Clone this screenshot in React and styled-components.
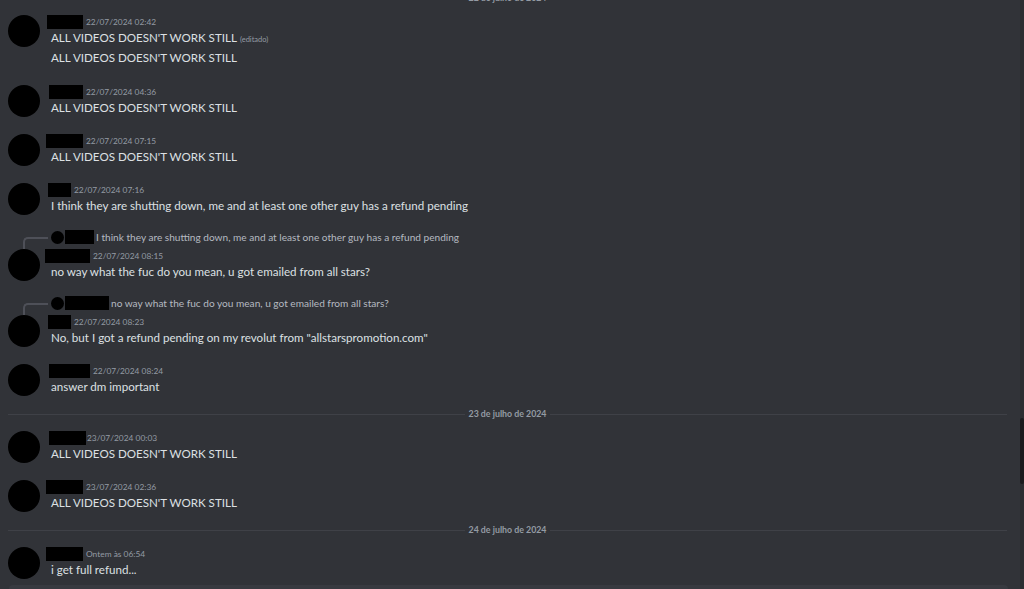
import styled, { createGlobalStyle } from 'styled-components'

const Global = createGlobalStyle`
    html, body {
        margin:0;
        padding:0;
        background:#313338;
        overflow:hidden;
    }
    body {
        font-family: Lato, "Noto Sans", sans-serif;
        -webkit-font-smoothing: antialiased;
    }
`

const Pagina = styled.div`
    width:1024px;
    height:589px;
    display:grid;
    grid-template-columns:1020px 4px;
    grid-template-rows:585px 1fr;
    background:#313338;
    overflow:hidden;
`

const Chat = styled.div`
    grid-row:1/2;
    grid-column:1/2;
    overflow:hidden;
`

const Lista = styled.div`
    display:flex;
    flex-direction:column;
    margin-top:-20px;
`

const Divisor = styled.div`
    height:18px;
    display:flex;
    align-items:center;
    margin:9px 13px 0 8px;
    flex-shrink:0;
`

const LineaDivisor = styled.span`
    flex:1;
    height:1px;
    background:#3f4147;
`

const TextoDivisor = styled.span`
    padding:0 4px;
    color:#949ba4;
    font-size:8.8px;
    font-weight:700;
    line-height:18px;
`

const Grupo = styled.div`
    display:flex;
    flex-direction:column;
    padding-top:${props => props.$padding}px;
    flex-shrink:0;
`

const Respuesta = styled.div`
    height:14px;
    display:flex;
    align-items:center;
    margin-bottom:5px;
    white-space:nowrap;
`

const Espina = styled.span`
    width:23px;
    height:10px;
    margin-left:23px;
    align-self:flex-start;
    margin-top:7px;
    border-left:2px solid #4e5058;
    border-top:2px solid #4e5058;
    border-top-left-radius:5px;
`

const MiniAvatar = styled.span`
    width:13px;
    height:13px;
    border-radius:50%;
    background:#000;
    margin-left:3px;
`

const Tachado = styled.span`
    height:14px;
    width:${props => props.$ancho}px;
    margin-left:${props => props.$x}px;
    background:#000;
    flex-shrink:0;
`

const TextoRespuesta = styled.span`
    margin-left:2px;
    color:#b5bac1;
    font-size:10.1px;
    line-height:14px;
`

const Fila = styled.div`
    display:grid;
    grid-template-columns:32px 1fr;
    column-gap:11px;
    padding-left:8px;
`

const Avatar = styled.div`
    width:32px;
    height:32px;
    border-radius:50%;
    background:#000;
`

const Contenido = styled.div`
    display:flex;
    flex-direction:column;
    min-width:0;
`

const Cabecera = styled.div`
    height:14px;
    display:flex;
    align-items:center;
`

const Hora = styled.span`
    margin-left:${props => props.$gap}px;
    color:#949ba4;
    font-size:8.4px;
    line-height:14px;
    white-space:nowrap;
`

const Mensaje = styled.div`
    color:#dde0e3;
    font-size:11.6px;
    line-height:17px;
    padding:${props => (props.$seguido ? '1px 0 2px' : '0')};
    white-space:nowrap;
`

const Editado = styled.span`
    margin-left:3px;
    color:#949ba4;
    font-size:7.5px;
`

const Barra = styled.div`
    grid-row:1/3;
    grid-column:2/3;
    background:#2b2d31;
`

const Pulgar = styled.div`
    width:4px;
    height:66px;
    border-radius:3px;
    background:#1a1b1e;
`

const Escritor = styled.div`
    grid-row:2/3;
    grid-column:1/2;
    margin:0 12px 0 9px;
    border-radius:8px 8px 0 0;
    background:#383a40;
`

const VIDEOS = "ALL VIDEOS DOESN'T WORK STILL"
const SHUT = 'I think they are shutting down, me and at least one other guy has a refund pending'
const NOWAY = 'no way what the fuc do you mean, u got emailed from all stars?'

const items = [
    { tipo: 'divisor', texto: '22 de julho de 2024' },
    { x: -4, ancho: 36, hora: '22/07/2024 02:42', lineas: [VIDEOS, VIDEOS], editado: true },
    { x: -2, ancho: 34, hora: '22/07/2024 04:36', lineas: [VIDEOS] },
    { x: -5, ancho: 37, hora: '22/07/2024 07:15', lineas: [VIDEOS] },
    { x: -3, ancho: 23, hora: '22/07/2024 07:16', lineas: [SHUT] },
    { x: -6, ancho: 45, hora: '22/07/2024 08:15', lineas: [NOWAY], respuesta: { ancho: 29, texto: SHUT } },
    { x: -3, ancho: 23, hora: '22/07/2024 08:23', lineas: ['No, but I got a refund pending on my revolut from "allstarspromotion.com"'], respuesta: { ancho: 44, texto: NOWAY } },
    { x: -2, ancho: 41, hora: '22/07/2024 08:24', lineas: ['answer dm important'] },
    { tipo: 'divisor', texto: '23 de julho de 2024' },
    { x: -2, ancho: 37, gap: 1, hora: '23/07/2024 00:03', lineas: [VIDEOS] },
    { x: -5, ancho: 37, hora: '23/07/2024 02:36', lineas: [VIDEOS] },
    { tipo: 'divisor', texto: '24 de julho de 2024' },
    { x: -5, ancho: 37, hora: 'Ontem às 06:54', lineas: ['i get full refund...'] },
]

function Divider({ texto }) {
    return (
        <Divisor>
            <LineaDivisor />
            <TextoDivisor>{texto}</TextoDivisor>
            <LineaDivisor />
        </Divisor>
    )
}

function Grupito({ item, despuesDivisor }) {
    // despues de un divisor el grupo va mas pegado
    let padding = despuesDivisor ? 8 : 17
    if (item.respuesta) padding = 15

    return (
        <Grupo $padding={padding}>
            {item.respuesta && (
                <Respuesta>
                    <Espina />
                    <MiniAvatar />
                    <Tachado $ancho={item.respuesta.ancho} $x={1} />
                    <TextoRespuesta>{item.respuesta.texto}</TextoRespuesta>
                </Respuesta>
            )}
            <Fila>
                <Avatar />
                <Contenido>
                    <Cabecera>
                        <Tachado $ancho={item.ancho} $x={item.x} />
                        <Hora $gap={item.gap ?? 3}>{item.hora}</Hora>
                    </Cabecera>
                    {item.lineas.map((linea, i) => (
                        <Mensaje key={i} $seguido={i > 0}>
                            {linea}
                            {item.editado && i === 0 ? <Editado>(editado)</Editado> : null}
                        </Mensaje>
                    ))}
                </Contenido>
            </Fila>
        </Grupo>
    )
}

export default function App() {
    return (
        <>
            <Global />
            <Pagina>
                <Chat>
                    <Lista>
                        {items.map((item, i) =>
                            item.tipo === 'divisor'
                                ? <Divider key={i} texto={item.texto} />
                                : <Grupito key={i} item={item} despuesDivisor={items[i - 1]?.tipo === 'divisor'} />
                        )}
                    </Lista>
                </Chat>
                <Barra>
                    <Pulgar style={{ marginTop: 418 }} />
                </Barra>
                <Escritor />
            </Pagina>
        </>
    )
}
